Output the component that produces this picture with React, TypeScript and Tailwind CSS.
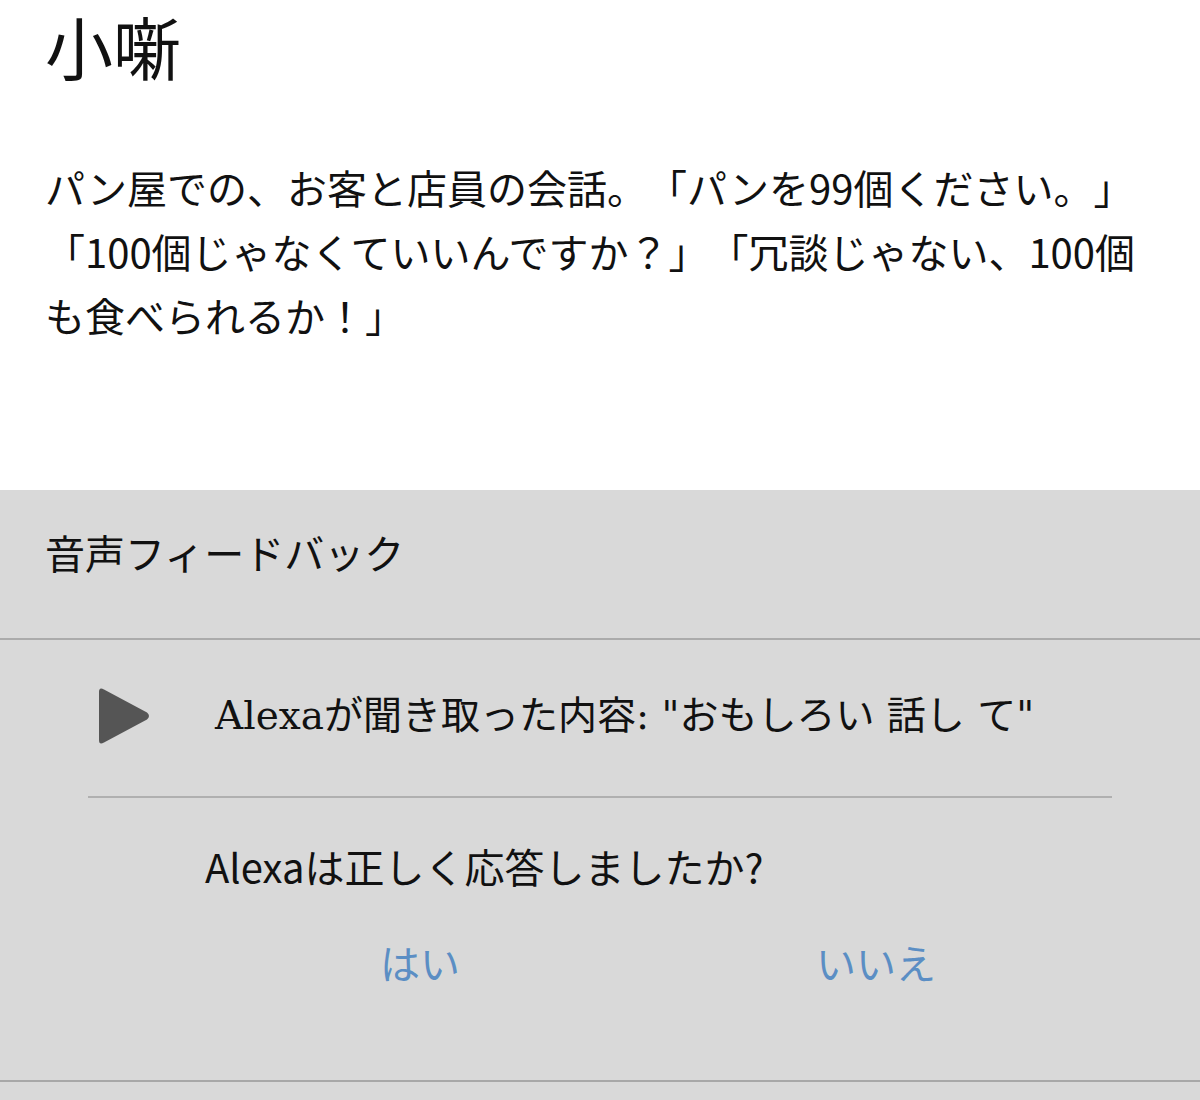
const sans = "font-['Noto_Sans_CJK_JP','Noto_Sans',sans-serif]";

function PlayIcon() {
  return (
    <svg width="56" height="60" viewBox="0 0 56 60" className="shrink-0">
      <path
        d="M3 6 Q3 0.5 8 3.5 L51 26.5 Q55 30 51 33.5 L8 56.5 Q3 59.5 3 54 Z"
        fill="#555555"
      />
    </svg>
  );
}

export default function App() {
  return (
    <div className={`w-[1200px] h-[1100px] overflow-hidden bg-white text-[#111] ${sans}`}>
      {/* story */}
      <div className="px-[45px]">
        <h1 className="text-[68px] leading-[92px] font-normal">小噺</h1>
        <p className="mt-[63px] text-[40px] leading-[64px] [text-spacing-trim:space-all]">
          パン屋での、お客と店員の会話。「パンを99個ください。」「100個じゃなくていいんですか？」「冗談じゃない、100個も食べられるか！」
        </p>
      </div>

      {/* feedback panel */}
      <div className="mt-[143px] bg-[#d9d9d9] h-[610px]">
        <div className="h-[148px] px-[45px] pt-[30px] text-[40px] leading-[64px]">音声フィードバック</div>
        <div className="h-[2px] bg-[#ababab]" />

        <div className="h-[156px] flex items-center pl-[96px] pb-[4px]">
          <PlayIcon />
          <div className="ml-[63px] text-[39px] leading-[56px] font-['DejaVu_Serif','Noto_Sans_CJK_JP',serif]">
            Alexaが聞き取った内容: "おもしろい 話し て"
          </div>
        </div>
        <div className="mx-[88px] h-[2px] bg-[#b0b0b0]" />

        <div className="pl-[205px] pt-[36px] text-[40px] leading-[64px]">Alexaは正しく応答しましたか?</div>
        <div className="ml-[192px] w-[912px] grid grid-cols-2 mt-[32px] text-[40px] leading-[64px] text-[#5b8ec4] text-center">
          <button className="leading-[64px]">はい</button>
          <button className="leading-[64px]">いいえ</button>
        </div>
        <div className="mt-[86px] h-[2px] bg-[#a8a8a8]" />
      </div>
    </div>
  );
}
